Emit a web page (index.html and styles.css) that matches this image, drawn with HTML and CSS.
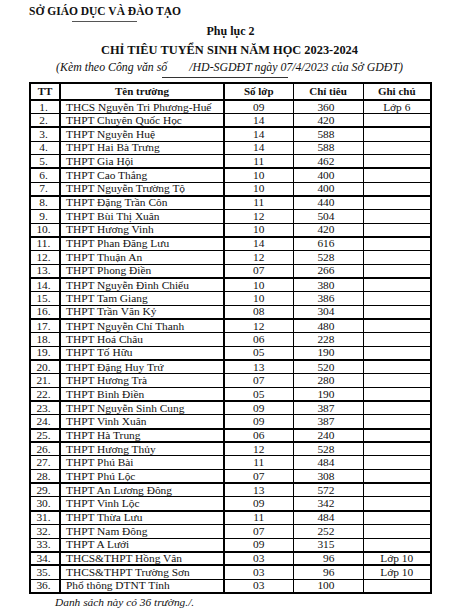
FILE: index.html
```html
<!DOCTYPE html>
<html lang="vi">
<head>
<meta charset="utf-8">
<title>Phụ lục 2</title>
<link rel="stylesheet" href="styles.css">
</head>
<body>
<div class="page">
  <header class="head">
    <div class="agency">SỞ GIÁO DỤC VÀ ĐÀO TẠO</div>
    <div class="agency-rule"></div>
    <div class="appendix">Phụ lục 2</div>
    <h1 class="title">CHỈ TIÊU TUYỂN SINH NĂM HỌC 2023-2024</h1>
    <div class="subtitle">(Kèm theo Công văn số<span class="gap"></span>/HD-SGDĐT ngày 07/4/2023 của Sở GDĐT)</div>
    <div class="sub-rule"></div>
  </header>
  <table class="quota">
    <colgroup>
      <col class="c-tt"><col class="c-name"><col class="c-cls"><col class="c-quota"><col class="c-note">
    </colgroup>
    <thead>
      <tr><th>TT</th><th>Tên trường</th><th>Số lớp</th><th>Chỉ tiêu</th><th>Ghi chú</th></tr>
    </thead>
    <tbody>
      <tr><td class="tt">1.</td><td class="name">THCS Nguyễn Tri Phương-Huế</td><td class="cls">09</td><td class="q">360</td><td class="note">Lớp 6</td></tr>
      <tr class="thick"><td class="tt">2.</td><td class="name">THPT Chuyên Quốc Học</td><td class="cls">14</td><td class="q">420</td><td class="note"></td></tr>
      <tr><td class="tt">3.</td><td class="name">THPT Nguyễn Huệ</td><td class="cls">14</td><td class="q">588</td><td class="note"></td></tr>
      <tr><td class="tt">4.</td><td class="name">THPT Hai Bà Trưng</td><td class="cls">14</td><td class="q">588</td><td class="note"></td></tr>
      <tr class="thick"><td class="tt">5.</td><td class="name">THPT Gia Hội</td><td class="cls">11</td><td class="q">462</td><td class="note"></td></tr>
      <tr><td class="tt">6.</td><td class="name">THPT Cao Thắng</td><td class="cls">10</td><td class="q">400</td><td class="note"></td></tr>
      <tr class="thick"><td class="tt">7.</td><td class="name">THPT Nguyễn Trường Tộ</td><td class="cls">10</td><td class="q">400</td><td class="note"></td></tr>
      <tr><td class="tt">8.</td><td class="name">THPT Đặng Trần Côn</td><td class="cls">11</td><td class="q">440</td><td class="note"></td></tr>
      <tr><td class="tt">9.</td><td class="name">THPT Bùi Thị Xuân</td><td class="cls">12</td><td class="q">504</td><td class="note"></td></tr>
      <tr class="thick"><td class="tt">10.</td><td class="name">THPT Hương Vinh</td><td class="cls">10</td><td class="q">420</td><td class="note"></td></tr>
      <tr><td class="tt">11.</td><td class="name">THPT Phan Đăng Lưu</td><td class="cls">14</td><td class="q">616</td><td class="note"></td></tr>
      <tr><td class="tt">12.</td><td class="name">THPT Thuận An</td><td class="cls">12</td><td class="q">528</td><td class="note"></td></tr>
      <tr class="thick"><td class="tt">13.</td><td class="name">THPT Phong Điền</td><td class="cls">07</td><td class="q">266</td><td class="note"></td></tr>
      <tr><td class="tt">14.</td><td class="name">THPT Nguyễn Đình Chiểu</td><td class="cls">10</td><td class="q">380</td><td class="note"></td></tr>
      <tr><td class="tt">15.</td><td class="name">THPT Tam Giang</td><td class="cls">10</td><td class="q">386</td><td class="note"></td></tr>
      <tr class="thick"><td class="tt">16.</td><td class="name">THPT Trần Văn Kỷ</td><td class="cls">08</td><td class="q">304</td><td class="note"></td></tr>
      <tr><td class="tt">17.</td><td class="name">THPT Nguyễn Chí Thanh</td><td class="cls">12</td><td class="q">480</td><td class="note"></td></tr>
      <tr><td class="tt">18.</td><td class="name">THPT Hoá Châu</td><td class="cls">06</td><td class="q">228</td><td class="note"></td></tr>
      <tr class="thick"><td class="tt">19.</td><td class="name">THPT Tố Hữu</td><td class="cls">05</td><td class="q">190</td><td class="note"></td></tr>
      <tr><td class="tt">20.</td><td class="name">THPT Đặng Huy Trứ</td><td class="cls">13</td><td class="q">520</td><td class="note"></td></tr>
      <tr><td class="tt">21.</td><td class="name">THPT Hương Trà</td><td class="cls">07</td><td class="q">280</td><td class="note"></td></tr>
      <tr class="thick"><td class="tt">22.</td><td class="name">THPT Bình Điền</td><td class="cls">05</td><td class="q">190</td><td class="note"></td></tr>
      <tr><td class="tt">23.</td><td class="name">THPT Nguyễn Sinh Cung</td><td class="cls">09</td><td class="q">387</td><td class="note"></td></tr>
      <tr class="thick"><td class="tt">24.</td><td class="name">THPT Vinh Xuân</td><td class="cls">09</td><td class="q">387</td><td class="note"></td></tr>
      <tr class="thick"><td class="tt">25.</td><td class="name">THPT Hà Trung</td><td class="cls">06</td><td class="q">240</td><td class="note"></td></tr>
      <tr><td class="tt">26.</td><td class="name">THPT Hương Thủy</td><td class="cls">12</td><td class="q">528</td><td class="note"></td></tr>
      <tr><td class="tt">27.</td><td class="name">THPT Phú Bài</td><td class="cls">11</td><td class="q">484</td><td class="note"></td></tr>
      <tr class="thick"><td class="tt">28.</td><td class="name">THPT Phú Lộc</td><td class="cls">07</td><td class="q">308</td><td class="note"></td></tr>
      <tr><td class="tt">29.</td><td class="name">THPT An Lương Đông</td><td class="cls">13</td><td class="q">572</td><td class="note"></td></tr>
      <tr class="thick"><td class="tt">30.</td><td class="name">THPT Vinh Lộc</td><td class="cls">09</td><td class="q">342</td><td class="note"></td></tr>
      <tr><td class="tt">31.</td><td class="name">THPT Thừa Lưu</td><td class="cls">11</td><td class="q">484</td><td class="note"></td></tr>
      <tr><td class="tt">32.</td><td class="name">THPT Nam Đông</td><td class="cls">07</td><td class="q">252</td><td class="note"></td></tr>
      <tr class="thick"><td class="tt">33.</td><td class="name">THPT A Lưới</td><td class="cls">09</td><td class="q">315</td><td class="note"></td></tr>
      <tr class="thick"><td class="tt">34.</td><td class="name">THCS&amp;THPT Hồng Vân</td><td class="cls">03</td><td class="q">96</td><td class="note">Lớp 10</td></tr>
      <tr><td class="tt">35.</td><td class="name">THCS&amp;THPT Trường Sơn</td><td class="cls">03</td><td class="q">96</td><td class="note">Lớp 10</td></tr>
      <tr><td class="tt">36.</td><td class="name">Phổ thông DTNT Tỉnh</td><td class="cls">03</td><td class="q">100</td><td class="note"></td></tr>
    </tbody>
  </table>
  <div class="footnote">Danh sách này có 36 trường./.</div>
</div>
</body>
</html>
```
FILE: styles.css
```css
html, body {
  margin: 0;
  padding: 0;
  background: #ffffff;
}
body {
  font-family: "Liberation Serif", "Times New Roman", serif;
  color: #111111;
}
.page {
  width: 460px;
  height: 610px;
  padding: 0 30px 0 29px;
  box-sizing: border-box;
  overflow: hidden;
}
.head {
  display: flex;
  flex-direction: column;
}
.agency {
  font-weight: bold;
  font-size: 11.5px;
  line-height: 14px;
  margin-top: 4px;
}
.agency-rule {
  width: 65px;
  height: 1px;
  background: #555555;
  margin: 3px 0 0 43px;
}
.appendix {
  font-weight: bold;
  font-size: 12px;
  line-height: 14px;
  text-align: center;
  margin: 2px -29px 0 -29px;
  padding-left: 2px;
}
.title {
  font-weight: bold;
  font-size: 12.4px;
  line-height: 15px;
  text-align: center;
  margin: 5px -29px 0 -29px;
}
.subtitle {
  font-style: italic;
  font-size: 11.85px;
  line-height: 14px;
  text-align: center;
  margin: 2px -29px 0 -29px;
}
.gap {
  display: inline-block;
  width: 22px;
}
.sub-rule {
  width: 126px;
  height: 1px;
  background: #333333;
  margin: 3px 0 0 133px;
}
.quota {
  width: 401px;
  border-collapse: collapse;
  table-layout: fixed;
  margin-top: 4px;
  border: 2px solid #000;
}
.c-tt { width: 30px; }
.c-name { width: 164px; }
.c-cls { width: 69px; }
.c-quota { width: 70px; }
.c-note { width: 68px; }
.quota th, .quota td {
  border: 1px solid #000;
  padding: 0;
  white-space: nowrap;
  overflow: hidden;
}
.quota thead tr {
  height: 17px;
}
.quota tbody tr {
  height: 13.7px;
}
.quota th {
  font-weight: bold;
  font-size: 11px;
  line-height: 13px;
  text-align: center;
  border-bottom-width: 2px;
}
.quota th:first-child, .quota td:first-child,
.quota th:nth-child(2), .quota td:nth-child(2) {
  border-right-width: 2px;
}
.quota td {
  font-size: 11.4px;
  line-height: 11px;
}
.quota tr.thick td {
  border-bottom-width: 2px;
}
.tt {
  text-align: center;
  padding-right: 3px !important;
}
.name {
  padding-left: 5px !important;
}
.cls {
  text-align: center;
}
.q {
  text-align: right;
  padding-right: 28px !important;
}
.note {
  text-align: center;
}
.footnote {
  font-style: italic;
  font-size: 11.4px;
  line-height: 14px;
  padding-left: 26px;
  margin-top: 1px;
}
```
